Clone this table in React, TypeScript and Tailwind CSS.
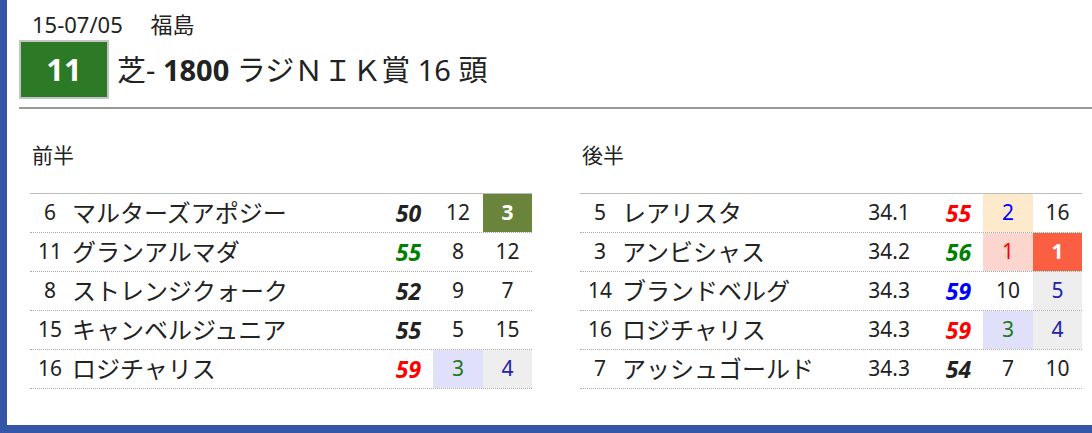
import React from 'react';

type Cell = { v: string; cls?: string };

interface Row {
  no: string;
  name: string;
  time?: string;
  score: Cell;
  a: Cell;
  b: Cell;
}

const SCORE_BLACK = 'text-[#222]';
const SCORE_RED = 'text-[#ff0000]';
const SCORE_GREEN = 'text-[#008000]';
const SCORE_BLUE = 'text-[#0000ff]';

const firstHalf: Row[] = [
  { no: '6', name: 'マルターズアポジー', score: { v: '50', cls: SCORE_BLACK }, a: { v: '12' }, b: { v: '3', cls: 'bg-[#6b843b] text-white font-bold' } },
  { no: '11', name: 'グランアルマダ', score: { v: '55', cls: SCORE_GREEN }, a: { v: '8' }, b: { v: '12' } },
  { no: '8', name: 'ストレンジクォーク', score: { v: '52', cls: SCORE_BLACK }, a: { v: '9' }, b: { v: '7' } },
  { no: '15', name: 'キャンベルジュニア', score: { v: '55', cls: SCORE_BLACK }, a: { v: '5' }, b: { v: '15' } },
  { no: '16', name: 'ロジチャリス', score: { v: '59', cls: SCORE_RED }, a: { v: '3', cls: 'bg-[#e0e0fa] text-[#1e7a1e]' }, b: { v: '4', cls: 'bg-[#eeeeee] text-[#2222aa]' } },
];

const secondHalf: Row[] = [
  { no: '5', name: 'レアリスタ', time: '34.1', score: { v: '55', cls: SCORE_RED }, a: { v: '2', cls: 'bg-[#fde9cc] text-[#0000ff]' }, b: { v: '16' } },
  { no: '3', name: 'アンビシャス', time: '34.2', score: { v: '56', cls: SCORE_GREEN }, a: { v: '1', cls: 'bg-[#fcd5cf] text-[#ff0000]' }, b: { v: '1', cls: 'bg-[#f95f40] text-white font-bold' } },
  { no: '14', name: 'ブランドベルグ', time: '34.3', score: { v: '59', cls: SCORE_BLUE }, a: { v: '10' }, b: { v: '5', cls: 'bg-[#eeeeee] text-[#2222aa]' } },
  { no: '16', name: 'ロジチャリス', time: '34.3', score: { v: '59', cls: SCORE_RED }, a: { v: '3', cls: 'bg-[#e0e0fa] text-[#1e7a1e]' }, b: { v: '4', cls: 'bg-[#eeeeee] text-[#2222aa]' } },
  { no: '7', name: 'アッシュゴールド', time: '34.3', score: { v: '54', cls: SCORE_BLACK }, a: { v: '7' }, b: { v: '10' } },
];

function HalfTable({ title, rows, withTime }: { title: string; rows: Row[]; withTime?: boolean }) {
  return (
    <div className="w-[502px]">
      <div className="pl-[2px] text-[21px] leading-[28px]">{title}</div>
      <div className="mt-[24px] border-t border-[#bbbbbb]">
        {rows.map((r, i) => (
          <div key={i} className="flex h-[39px] border-b border-dotted border-[#aaaaaa] text-[21px]">
            <div className="w-[40px] flex items-center justify-center">{r.no}</div>
            <div className="flex-1 flex items-center pl-[2px] text-[24px] whitespace-nowrap">{r.name}</div>
            {withTime && (
              <div className="w-[71px] flex items-center justify-end pr-[24px]">{r.time}</div>
            )}
            <div className={`w-[49px] flex items-center justify-center font-bold italic text-[23px] ${r.score.cls ?? ''}`}>
              {r.score.v}
            </div>
            <div className={`w-[50px] flex items-center justify-center ${r.a.cls ?? ''}`}>{r.a.v}</div>
            <div className={`w-[49px] flex items-center justify-center ${r.b.cls ?? ''}`}>{r.b.v}</div>
          </div>
        ))}
      </div>
    </div>
  );
}

export default function App() {
  return (
    <div className="h-[433px] bg-[#3556a6] pl-[7px] overflow-hidden">
      <div
        className="h-[425px] bg-white pl-[12px] text-[#222]"
        style={{ fontFamily: '"Noto Sans", "Noto Sans CJK JP", sans-serif' }}
      >
        {/* Race header */}
        <div className="pt-[11px] pl-[13px] text-[22px] leading-[27px] whitespace-pre">15-07/05　 福島</div>
        <div className="mt-[2px] flex items-center">
          <div className="w-[90px] h-[59px] border-2 border-[#c4c4c4] bg-[#2d7a26] flex items-center justify-center text-white font-bold text-[31px]">
            11
          </div>
          <div className="ml-[8px] text-[29px] leading-[34px] whitespace-nowrap">
            芝- <span className="font-bold">1800</span> ラジＮＩＫ賞 16 頭
          </div>
        </div>
        <div className="mt-[8px] h-[2px] bg-[#999999]" />

        {/* First / second half */}
        <div className="mt-[32px] pl-[11px] flex gap-[48px]">
          <HalfTable title="前半" rows={firstHalf} />
          <HalfTable title="後半" rows={secondHalf} withTime />
        </div>
      </div>
    </div>
  );
}
